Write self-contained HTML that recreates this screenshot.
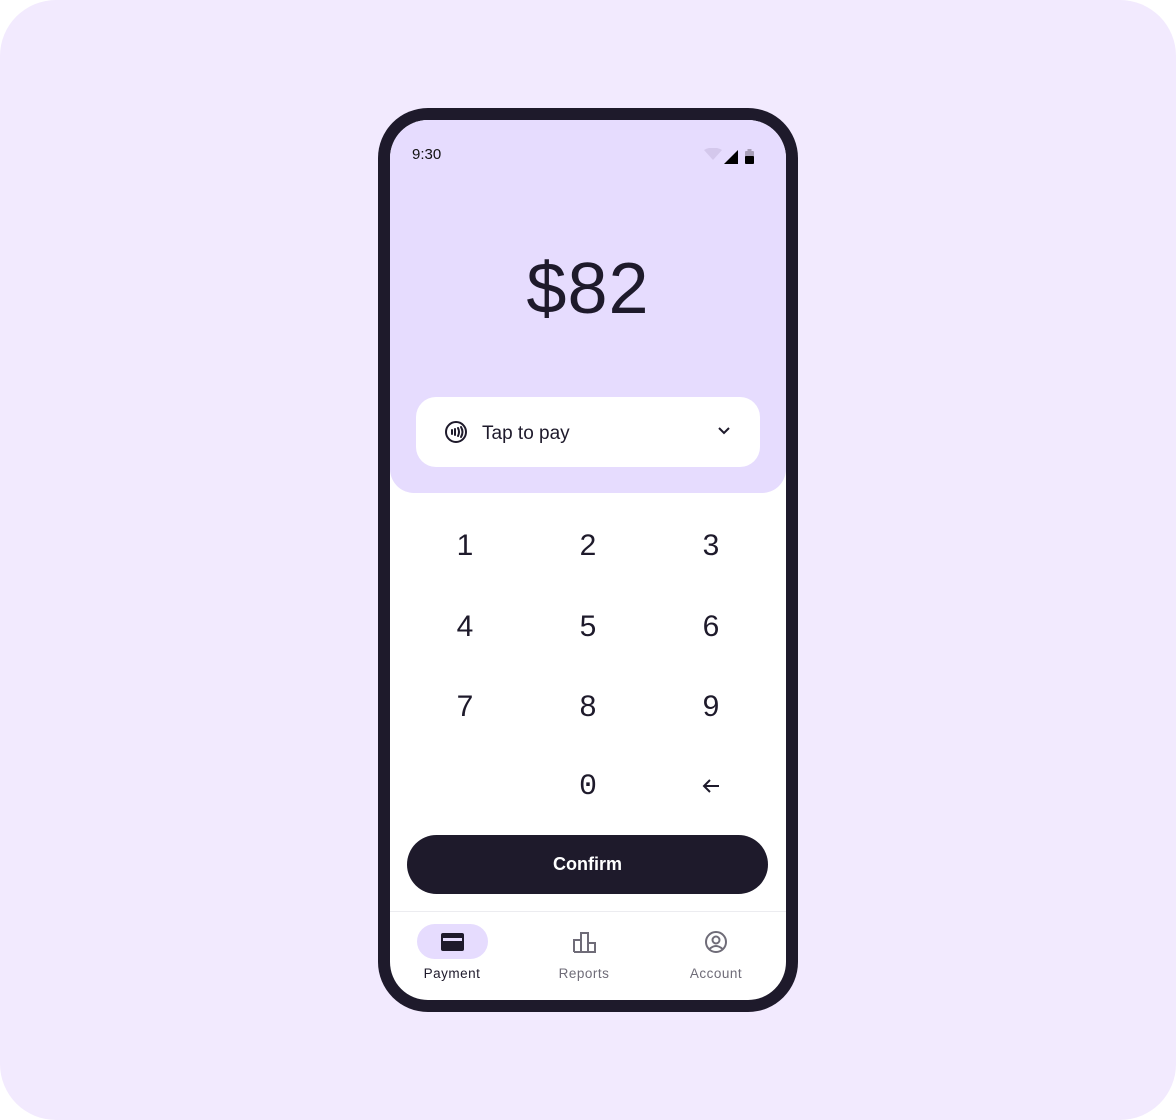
<!DOCTYPE html>
<html><head><style>
*{margin:0;padding:0;box-sizing:border-box}
body{width:1176px;height:1120px;background:#fff;font-family:"Liberation Sans",sans-serif;overflow:hidden}
.bg{position:absolute;left:0;top:0;width:1176px;height:1120px;background:#f2eafe;border-radius:56px}
.phone{position:absolute;left:378px;top:108px;width:420px;height:904px;background:#1e1a2b;border-radius:50px}
.screen{position:absolute;left:12px;top:12px;width:396px;height:880px;background:#fff;border-radius:38px;overflow:hidden}
.top{position:absolute;left:0;top:0;width:396px;height:373px;background:#e6dcfe;border-radius:0 0 24px 24px}
.time{position:absolute;left:22px;top:26px;font-size:15px;color:#111}
.amt{position:absolute;left:0;width:396px;top:128px;text-align:center;font-size:72px;color:#1e1a2b;letter-spacing:1px}
.dd{position:absolute;left:26px;top:277px;width:344px;height:70px;background:#fff;border-radius:20px}
.dd span{position:absolute;left:66px;top:26px;font-size:19px;color:#1e1a2b}
.k{position:absolute;width:80px;margin-left:-40px;text-align:center;font-size:30px;color:#1e1a2b;font-family:"Liberation Sans",sans-serif}
.btn{position:absolute;left:17px;top:715px;width:361px;height:59px;background:#1e1a2b;border-radius:30px;color:#fff;font-weight:bold;font-size:18px;text-align:center;line-height:59px}
.div{position:absolute;left:0;top:791px;width:396px;height:1px;background:#ececf0}
.lbl{position:absolute;top:846px;width:120px;margin-left:-60px;text-align:center;font-size:13.5px;color:#6f6c78;letter-spacing:.5px}
</style></head><body>
<div class="bg"></div>
<div class="phone"><div class="screen">
<div class="top">
<div class="time">9:30</div>
<svg style="position:absolute;left:314px;top:28px" width="50" height="18">
<path d="M0 2 Q9 -3 18 2 L9 12Z" fill="#d4c8ec"/>
<path d="M20 16 L34 2 L34 16Z" fill="#000"/>
<rect x="41" y="3" width="9" height="13" rx="1" fill="#a89fb8"/><rect x="43.5" y="1" width="4" height="3" fill="#a89fb8"/>
<rect x="41" y="8" width="9" height="8" rx="1" fill="#000"/>
</svg>
<div class="amt">$82</div>
<div class="dd">
<svg style="position:absolute;left:28px;top:23px" width="24" height="24" viewBox="0 0 24 24" fill="none" stroke="#1e1a2b" stroke-width="2" stroke-linecap="round"><circle cx="12" cy="12" r="10"/><path d="M8 10v4M11 9v6M14 8q2 4 0 8M17 7q3 5 0 10"/></svg>
<span>Tap to pay</span>
<svg style="position:absolute;left:301px;top:29px" width="14" height="10" viewBox="0 0 14 10" fill="none" stroke="#1e1a2b" stroke-width="2"><path d="M2 2l5 5 5-5"/></svg>
</div>
</div>
<div class="k" style="left:75px;top:409px">1</div>
<div class="k" style="left:198px;top:409px">2</div>
<div class="k" style="left:321px;top:409px">3</div>
<div class="k" style="left:75px;top:490px">4</div>
<div class="k" style="left:198px;top:490px">5</div>
<div class="k" style="left:321px;top:490px">6</div>
<div class="k" style="left:75px;top:570px">7</div>
<div class="k" style="left:198px;top:570px">8</div>
<div class="k" style="left:321px;top:570px">9</div>
<div class="k" style="left:198px;top:650px;font-family:'Liberation Mono',monospace">0</div>
<svg style="position:absolute;left:311px;top:658px" width="20" height="16" viewBox="0 0 20 16" fill="none" stroke="#1e1a2b" stroke-width="2"><path d="M18 8H3M9 2L3 8l6 6"/></svg>
<div class="btn">Confirm</div>
<div class="div"></div>
<div style="position:absolute;left:27px;top:804px;width:71px;height:35px;background:#e6dcfe;border-radius:18px"></div>
<svg style="position:absolute;left:51px;top:813px" width="23" height="18" viewBox="0 0 23 18"><rect x="0" y="0" width="23" height="18" rx="2" fill="#1e1a2b"/><rect x="2" y="5" width="19" height="3" fill="#e6dcfe"/></svg>
<svg style="position:absolute;left:183px;top:811px" width="24" height="22" viewBox="0 0 24 22" fill="none" stroke="#6f6c78" stroke-width="2"><path d="M1 21V9h7v12M8 21V2h7v19M15 21V12h7v9H1"/></svg>
<svg style="position:absolute;left:314px;top:810px" width="24" height="24" viewBox="0 0 24 24" fill="none" stroke="#6f6c78" stroke-width="2"><circle cx="12" cy="12" r="10"/><circle cx="12" cy="10" r="3.5"/><path d="M5.5 19q6.5-6 13 0"/></svg>
<div class="lbl" style="left:62px;color:#1e1a2b">Payment</div>
<div class="lbl" style="left:194px">Reports</div>
<div class="lbl" style="left:326px">Account</div>
</div></div>
</body></html>
